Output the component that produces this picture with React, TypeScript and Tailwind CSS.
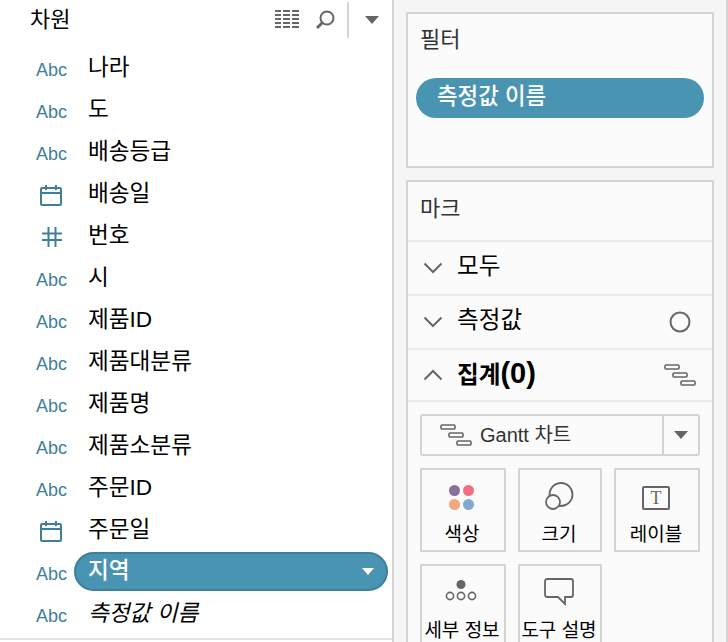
import React from 'react';

const FONT = '"Liberation Sans", "Noto Sans CJK KR", sans-serif';

const CalendarIcon = () => (
  <svg width="24" height="22" viewBox="0 0 24 22" fill="none" stroke="#3d7f9c" strokeWidth="2">
    <rect x="2" y="4" width="20" height="17" rx="1" />
    <path d="M2 9h20M7 1v5M17 1v5" />
  </svg>
);

const HashIcon = () => (
  <svg width="24" height="22" viewBox="0 0 24 22" fill="none" stroke="#3d7f9c" strokeWidth="2">
    <path d="M8.5 1v20M15.5 1v20M2 7.5h20M2 14h20" />
  </svg>
);

const GanttIcon = () => (
  <svg width="32" height="22" viewBox="0 0 32 22" fill="none" stroke="#666" strokeWidth="1.6">
    <rect x="1" y="1" width="14" height="4" rx="1" />
    <rect x="9" y="9" width="14" height="4" rx="1" />
    <rect x="17" y="17" width="14" height="4" rx="1" />
  </svg>
);

const Chevron = ({ up }: { up?: boolean }) => (
  <svg width="20" height="12" viewBox="0 0 20 12" fill="none" stroke="#666" strokeWidth="2">
    <path d={up ? 'M1.5 10.5 10 2l8.5 8.5' : 'M1.5 1.5 10 10l8.5-8.5'} />
  </svg>
);

const fields: { name: string; type: 'abc' | 'date' | 'num'; pill?: boolean; italic?: boolean }[] = [
  { name: '나라', type: 'abc' },
  { name: '도', type: 'abc' },
  { name: '배송등급', type: 'abc' },
  { name: '배송일', type: 'date' },
  { name: '번호', type: 'num' },
  { name: '시', type: 'abc' },
  { name: '제품ID', type: 'abc' },
  { name: '제품대분류', type: 'abc' },
  { name: '제품명', type: 'abc' },
  { name: '제품소분류', type: 'abc' },
  { name: '주문ID', type: 'abc' },
  { name: '주문일', type: 'date' },
  { name: '지역', type: 'abc', pill: true },
  { name: '측정값 이름', type: 'abc', italic: true },
];

const FieldRow = ({ field }: { field: (typeof fields)[number] }) => (
  <div className="flex h-[42px] items-center">
    <div className="flex w-[74px] shrink-0 justify-start pl-[36px]">
      {field.type === 'abc' && <span className="text-[18px] leading-none text-[#3d7f9c] pt-[2px]">Abc</span>}
      {field.type === 'date' && <span className="flex pl-[3px]"><CalendarIcon /></span>}
      {field.type === 'num' && <span className="flex pl-[4px]"><HashIcon /></span>}
    </div>
    {field.pill ? (
      <div className="mb-[3px] flex h-[39px] w-[314px] items-center justify-between rounded-full border-2 border-[#3d7f9c] bg-[#4a94b3] pl-[12px] pr-[12px] text-white">
        <span className="text-[22.6px] leading-none font-medium">{field.name}</span>
        <span className="h-0 w-0 border-x-[6px] border-t-[7px] border-x-transparent border-t-white" />
      </div>
    ) : (
      <span className={`pl-[14px] text-[22.6px] leading-none text-black pb-[2px] ${field.italic ? 'italic' : ''}`}>{field.name}</span>
    )}
  </div>
);

const MarkRow = ({ label, up, bold, right, tall = true }: { label: React.ReactNode; up?: boolean; bold?: boolean; right?: React.ReactNode; tall?: boolean }) => (
  <div className={`flex items-center border-t-2 border-[#ebebeb] pl-[15px] pr-[16px] ${tall ? 'h-[54px]' : 'h-[52px]'}`}>
    <Chevron up={up} />
    <span className={`ml-[14px] text-[23.6px] leading-none text-black pb-[3px] ${bold ? 'font-bold' : ''}`}>{label}</span>
    <span className="ml-auto flex">{right}</span>
  </div>
);

const MarkButton = ({ label, icon, className }: { label: string; icon: React.ReactNode; className: string }) => (
  <div className={`flex h-[84px] flex-col items-center border-2 border-[#d4d4d4] pr-[2px] ${className}`}>
    <div className="flex h-[40px] shrink-0 items-end">{icon}</div>
    <span className="mt-[13px] whitespace-nowrap text-[19px] leading-[24px] text-black">{label}</span>
  </div>
);

export default function App() {
  return (
    <div className="flex h-[642px] w-[728px] overflow-hidden bg-[#f5f5f5]" style={{ fontFamily: FONT }}>
      {/* Dimensions panel */}
      <div className="flex h-full w-[394px] shrink-0 flex-col border-r-2 border-[#d4d4d4] bg-white">
        <div className="flex h-[48px] shrink-0 items-start pl-[30px]">
          <span className="pt-[6px] text-[22px] leading-[28px] text-black">차원</span>
          <div className="ml-auto flex items-start">
            <svg className="mt-[10px]" width="24" height="18" viewBox="0 0 24 18" fill="#666">
              <path d="M0 0h6v2H0zM8 0h7v2H8zM17 0h7v2h-7zM0 4h6v2H0zM8 4h7v2H8zM17 4h7v2h-7zM0 8h6v2H0zM8 8h7v2H8zM17 8h7v2h-7zM0 12h6v2H0zM8 12h7v2H8zM17 12h7v2h-7zM0 16h6v2H0zM8 16h7v2H8zM17 16h7v2h-7z" />
            </svg>
            <svg className="ml-[16px] mt-[10px]" width="20" height="20" viewBox="0 0 20 20" fill="none" stroke="#666">
              <circle cx="12" cy="8" r="6.5" strokeWidth="2" />
              <path d="M7.5 12.5 2 18" strokeWidth="3" />
            </svg>
            <div className="ml-[12px] mt-[2px] h-[36px] w-[2px] bg-[#d4d4d4]" />
            <div className="ml-[16px] mr-[13px] mt-[16px] h-0 w-0 border-x-[7px] border-t-[8px] border-x-transparent border-t-[#666]" />
          </div>
        </div>
        <div className="flex flex-col">
          {fields.map((f) => (
            <FieldRow key={f.name} field={f} />
          ))}
        </div>
        <div className="mt-[2px] h-[2px] bg-[#e2e2e2]" />
      </div>

      {/* Cards column */}
      <div className="flex w-[332px] shrink-0 flex-col gap-[12px] pl-[12px] pr-[12px] pt-[12px]">
        <div className="h-[156px] shrink-0 border-2 border-[#d4d4d4] bg-[#fbfbfb] px-[8px]">
          <div className="pl-[4px] pt-[11px] text-[22px] leading-[30px] text-[#333]">필터</div>
          <div className="mt-[23px] flex h-[40px] items-center rounded-full bg-[#4a94b3] pl-[21px] text-[22.4px] font-medium leading-none text-white">
            <span className="pb-[1px]">측정값 이름</span>
          </div>
        </div>
        <div className="h-[474px] shrink-0 border-2 border-[#d4d4d4] bg-[#fbfbfb]">
          <div className="h-[58px] pl-[12px] pt-[12px] text-[22px] leading-[30px] text-[#333]">마크</div>
          <MarkRow label="모두" />
          <MarkRow
            label="측정값"
            right={
              <svg className="mr-[5px]" width="22" height="22" viewBox="0 0 22 22" fill="none" stroke="#666" strokeWidth="2">
                <circle cx="11" cy="11" r="9.5" />
              </svg>
            }
          />
          <MarkRow
            tall={false}
            label={<>집계<span className="text-[29px]">(0)</span></>}
            up
            bold
            right={<GanttIcon />}
          />
          <div className="border-t-2 border-[#ebebeb] px-[12px] pt-[12px]">
            <div className="flex h-[42px] items-center rounded-[3px] border-2 border-[#d4d4d4]">
              <div className="flex flex-1 items-center pl-[18px]">
                <GanttIcon />
                <span className="ml-[8px] text-[20px] leading-none text-[#333]">Gantt 차트</span>
              </div>
              <div className="flex h-full w-[36px] items-center justify-center border-l-2 border-[#d4d4d4]">
                <div className="h-0 w-0 border-x-[7px] border-t-[8px] border-x-transparent border-t-[#666]" />
              </div>
            </div>
            <div className="mt-[12px] flex flex-wrap gap-x-[12px] gap-y-[12px]">
              <MarkButton
                className="w-[86px]"
                label="색상"
                icon={
                  <div className="mr-[2px] grid grid-cols-2 gap-[3px]">
                    <span className="h-[11px] w-[11px] rounded-full bg-[#8a6f9c]" />
                    <span className="h-[11px] w-[11px] rounded-full bg-[#f0707f]" />
                    <span className="h-[11px] w-[11px] rounded-full bg-[#f2a77e]" />
                    <span className="h-[11px] w-[11px] rounded-full bg-[#83a9cc]" />
                  </div>
                }
              />
              <MarkButton
                className="w-[84px]"
                label="크기"
                icon={
                  <svg width="30" height="28" viewBox="0 0 30 28" fill="none" stroke="#666" strokeWidth="1.8">
                    <circle cx="17" cy="12.5" r="11.5" />
                    <circle cx="9" cy="20" r="7" fill="#fbfbfb" />
                  </svg>
                }
              />
              <MarkButton
                className="w-[86px]"
                label="레이블"
                icon={
                  <div className="flex h-[24px] w-[28px] items-center justify-center rounded-[2px] border-2 border-[#666] text-[18px] leading-none text-[#666]" style={{ fontFamily: '"Liberation Serif", serif' }}>
                    T
                  </div>
                }
              />
              <MarkButton
                className="w-[86px]"
                label="세부 정보"
                icon={
                  <svg width="32" height="24" viewBox="0 0 32 24" fill="none" stroke="#666" strokeWidth="1.6" className="mb-[2px] mr-[2px]">
                    <circle cx="16" cy="4.5" r="4.5" fill="#666" stroke="none" />
                    <circle cx="5" cy="16" r="3.6" />
                    <circle cx="16" cy="16" r="3.6" />
                    <circle cx="27" cy="16" r="3.6" />
                  </svg>
                }
              />
              <MarkButton
                className="w-[84px]"
                label="도구 설명"
                icon={
                  <svg width="30" height="28" viewBox="0 0 30 28" fill="none" stroke="#666" strokeWidth="1.8">
                    <path d="M3 1h24a2 2 0 0 1 2 2v14a2 2 0 0 1-2 2h-6v7l-7-7H3a2 2 0 0 1-2-2V3a2 2 0 0 1 2-2z" />
                  </svg>
                }
              />
            </div>
          </div>
        </div>
      </div>
      <div className="h-full w-[2px] bg-[#d4d4d4]" />
    </div>
  );
}
